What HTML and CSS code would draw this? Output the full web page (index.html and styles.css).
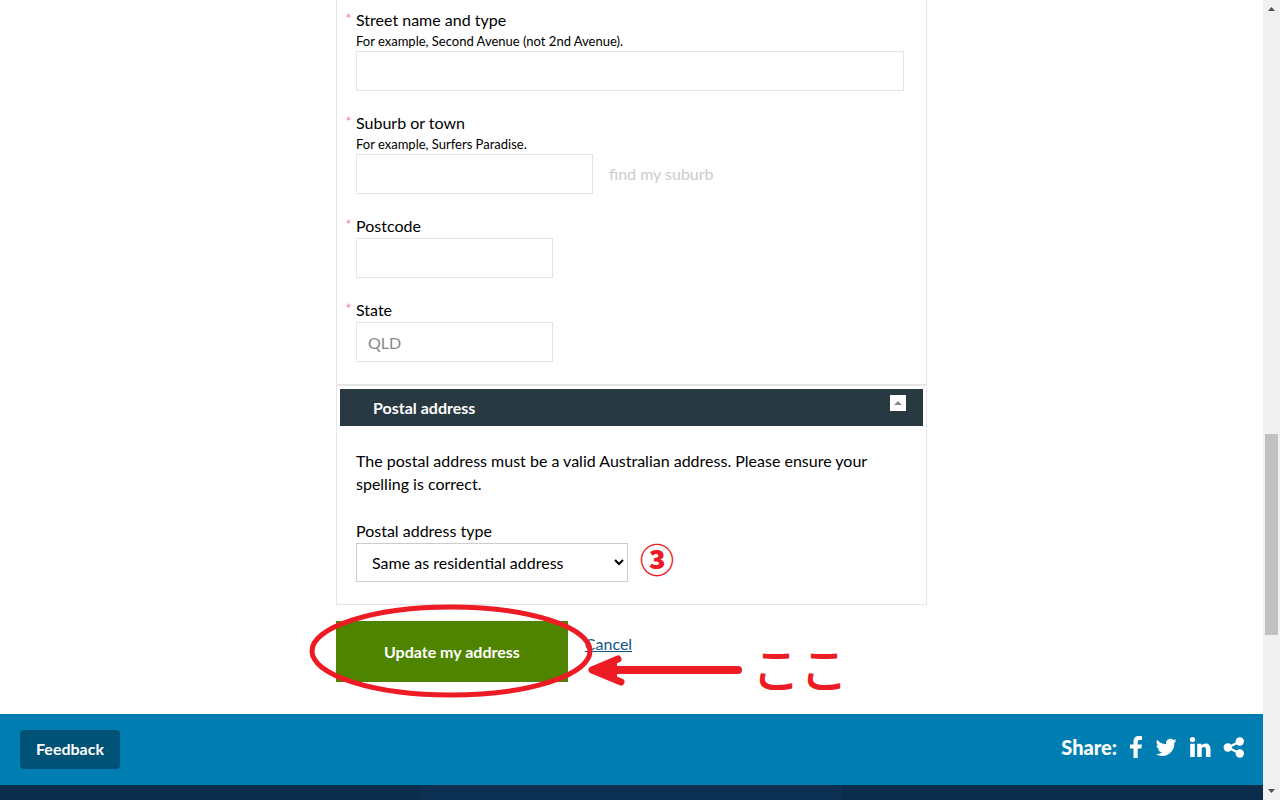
FILE: index.html
```html
<!DOCTYPE html>
<html lang="en">

<head>
    <meta charset="UTF-8" />
    <meta name="viewport" content="width=device-width, initial-scale=1.0" />
    <title>Update my address</title>
    <link rel="stylesheet" href="styles.css">
</head>

<body>
    <div class="page">
        <main class="content">
            <form>
                <section class="panel residential">
                    <div class="field">
                        <label class="required" for="street">Street name and type</label>
                        <span class="hint">For example, Second Avenue (not 2nd Avenue).</span>
                        <input type="text" id="street" class="full">
                    </div>
                    <div class="field">
                        <label class="required" for="suburb">Suburb or town</label>
                        <span class="hint">For example, Surfers Paradise.</span>
                        <div class="row">
                            <input type="text" id="suburb" class="medium">
                            <button type="button" class="find" disabled>find my suburb</button>
                        </div>
                    </div>
                    <div class="field">
                        <label class="required" for="postcode">Postcode</label>
                        <input type="text" id="postcode" class="short">
                    </div>
                    <div class="field">
                        <label class="required" for="state">State</label>
                        <input type="text" id="state" class="short" value="QLD" disabled>
                    </div>
                </section>

                <section class="panel postal">
                    <div class="panel-header">
                        <h2>Postal address</h2>
                        <button type="button" class="toggle" aria-label="Collapse">
                            <svg width="16" height="16" viewBox="0 0 16 16"><path d="M4 10 L8 6 L12 10 Z" fill="#888" /></svg>
                        </button>
                    </div>
                    <div class="panel-body">
                        <p>The postal address must be a valid Australian address. Please ensure your spelling is correct.</p>
                        <label for="postal-type">Postal address type</label>
                        <div class="row">
                            <select id="postal-type">
                                <option>Same as residential address</option>
                            </select>
                            <span class="step">③</span>
                        </div>
                    </div>
                </section>

                <div class="actions">
                    <button type="submit" class="submit">Update my address</button>
                    <a href="#" class="cancel">Cancel</a>
                    <!-- Hand drawn marks over the button -->
                    <div class="marks">
                        <svg width="446" height="100" viewBox="0 0 446 100" fill="none" stroke="#ed1c24" stroke-linecap="round">
                            <ellipse cx="145" cy="50" rx="139" ry="44" stroke-width="5" />
                            <path d="M288 69 H432" stroke-width="8" />
                            <path d="M312 58 L286 69 L315 81" stroke-width="7" stroke-linejoin="round" />
                            <path d="M285 69 L310 60 V79 Z" fill="#ed1c24" stroke-width="2" />
                        </svg>
                        <span class="here" lang="ja">ここ</span>
                    </div>
                </div>
            </form>
        </main>

        <div class="share-bar">
            <button type="button" class="feedback">Feedback</button>
            <div class="share">
                <span>Share:</span>
                <a href="#" aria-label="Facebook">
                    <svg width="14" height="24" viewBox="0 0 14 24" fill="#fff"><path d="M13 1.2V5H10.7C9 5 8.7 5.8 8.7 7V9.500H12.900L12.300 13.500H8.700V23H4.500V13.500H1V9.500H4.500V6.500C4.500 3 6.600 1 9.800 1C11.300 1 12.600 1.100 13 1.200Z" /></svg>
                </a>
                <a href="#" aria-label="Twitter">
                    <svg width="22" height="24" viewBox="0 0 22 24" fill="#fff"><path d="M21.500 5.500C20.900 6.400 20.200 7.100 19.300 7.800C19.800 14.500 14.900 21 7.500 21C5 21 2.700 20.300 .8 19C3 19.300 5.300 18.600 7 17.300C5.100 17.200 3.600 16 3 14.300C3.700 14.400 4.300 14.400 4.900 14.200C2.900 13.700 1.500 12 1.500 9.900C2.100 10.300 2.800 10.500 3.400 10.500C1.600 9.200 1 6.700 2.100 4.700C4.300 7.300 7.400 9 11.100 9.200C10.400 6.400 12.500 3.700 15.400 3.700C16.600 3.700 17.700 4.200 18.500 5.100C19.500 4.900 20.400 4.500 21.200 4C20.900 5 20.200 5.900 19.300 6.300C20.100 6.200 20.800 6 21.500 5.500Z" /></svg>
                </a>
                <a href="#" aria-label="LinkedIn">
                    <svg width="22" height="24" viewBox="0 0 22 24" fill="#fff"><circle cx="3.500" cy="4.500" r="2.600" /><path d="M1.200 8.700H5.800V22H1.200ZM8.200 8.700H12.600V10.600C13.500 9.100 14.900 8.400 16.600 8.400C19.500 8.400 21.500 10.300 21.500 14.300V22H17V14.900C17 13.100 16.400 12 14.900 12C13.500 12 12.700 13.100 12.700 14.700V22H8.200Z" /></svg>
                </a>
                <a href="#" aria-label="More">
                    <svg width="22" height="24" viewBox="0 0 22 24" fill="#fff"><circle cx="4.800" cy="12.500" r="4.200" /><circle cx="16.800" cy="6.500" r="4.200" /><circle cx="16.800" cy="18.500" r="4.200" /><path d="M17 6.500L5 12.500L17 18.500" fill="none" stroke="#fff" stroke-width="2.500" /></svg>
                </a>
            </div>
        </div>
        <footer class="footer">
            <div></div>
            <div></div>
            <div></div>
        </footer>
    </div>

    <div class="scrollbar">
        <svg width="17" height="17" viewBox="0 0 17 17"><path d="M5 11 L8.500 7 L12 11 Z" fill="#505050" /></svg>
        <div class="thumb"></div>
        <svg width="17" height="17" viewBox="0 0 17 17"><path d="M5 6 H12 L8.500 10 Z" fill="#505050" /></svg>
    </div>
</body>

</html>
```

FILE: styles.css
```css
* {
    margin: 0;
    padding: 0;
    box-sizing: border-box;
}

body {
    display: flex;
    height: 100vh;
    overflow: hidden;
    background: #fff;
    color: #000;
    font-family: Lato, "Noto Sans CJK JP", sans-serif;
    font-size: 16px;
    line-height: 24px;
}

button,
input,
select {
    font: inherit;
}

svg {
    display: block;
}

.page {
    flex: 1;
    display: flex;
    flex-direction: column;
}

.content {
    width: 100%;
    max-width: 591px;
    margin: 0 auto;
}

/* Panels */
.panel {
    border: 1px solid #e5e5e5;
}

.residential {
    display: flex;
    flex-direction: column;
    gap: 20px;
    border-top: none;
    padding: 8px 22px 22px 19px;
}

.postal {
    padding: 3px;
}

.panel-header {
    display: flex;
    justify-content: space-between;
    align-items: flex-start;
    background: #283942;
    padding: 6px 17px 6px 33px;
}

.panel-header h2 {
    color: #fff;
    font-size: 16px;
    line-height: 25px;
}

.toggle {
    width: 16px;
    height: 16px;
    background: #fff;
    border: none;
}

.panel-body {
    padding: 23px 16px 19px;
}

.panel-body p {
    line-height: 23px;
    margin-bottom: 24px;
}

/* Fields */
label {
    display: block;
}

.required {
    position: relative;
}

.required::before {
    content: "*";
    position: absolute;
    left: -11px;
    top: -1px;
    color: #ee4a6b;
    font-size: 16px;
    font-weight: 300;
}

.hint {
    display: block;
    font-size: 13px;
    line-height: 19px;
}

input {
    display: block;
    height: 40px;
    border: 1px solid #e5e5e5;
    background: #fff;
    padding: 0 11px;
}

input:disabled {
    color: #888;
}

.full {
    width: 100%;
}

.medium {
    width: 237px;
}

.short {
    width: 197px;
}

.row {
    display: flex;
    align-items: center;
}

.find {
    margin-left: 16px;
    border: none;
    background: none;
    color: #ccc;
}

select {
    width: 272px;
    height: 39px;
    border: 1px solid #ccc;
    background: #fff;
    color: #000;
    padding-left: 11px;
}

.step {
    margin-left: 12px;
    padding-bottom: 7px;
    color: #ed1c24;
    font-family: "Noto Sans CJK JP", sans-serif;
    font-size: 34px;
    font-weight: 900;
}

/* Buttons */
.actions {
    position: relative;
    display: flex;
    align-items: flex-start;
    margin: 16px 0 32px;
}

.submit {
    height: 61px;
    padding: 0 48px;
    border: none;
    background: #4f8400;
    color: #fff;
    font-weight: bold;
}

.cancel {
    margin: 11px 0 0 17px;
    color: #0f5489;
}

.marks {
    position: absolute;
    left: -30px;
    top: -20px;
    display: flex;
    align-items: center;
}

.here {
    color: #ed1c24;
    font-family: "Noto Sans CJK JP", sans-serif;
    font-size: 48px;
    font-weight: 500;
    white-space: nowrap;
    padding-top: 32px;
}

/* Footer */
.share-bar {
    display: flex;
    justify-content: space-between;
    align-items: flex-start;
    background: #007eb1;
    padding: 16px 18px 16px 20px;
}

.feedback {
    height: 39px;
    padding: 0 16px 2px;
    border: none;
    border-radius: 4px;
    background: #005375;
    color: #fff;
    font-weight: bold;
}

.share {
    display: flex;
    align-items: center;
    gap: 12px;
    padding-top: 5px;
    color: #fff;
    font-size: 20px;
    font-weight: 900;
}

.footer {
    flex: 1;
    display: flex;
    background: #0b2c4a;
}

.footer div {
    flex: 1;
}

.footer div:nth-child(2) {
    background: #0b3052;
}

/* Scrollbar */
.scrollbar {
    display: flex;
    flex-direction: column;
    width: 17px;
    background: #f0f0f0;
}

.thumb {
    flex: 0 0 201px;
    margin: auto 2px 148px;
    background: #c1c1c1;
}
```
